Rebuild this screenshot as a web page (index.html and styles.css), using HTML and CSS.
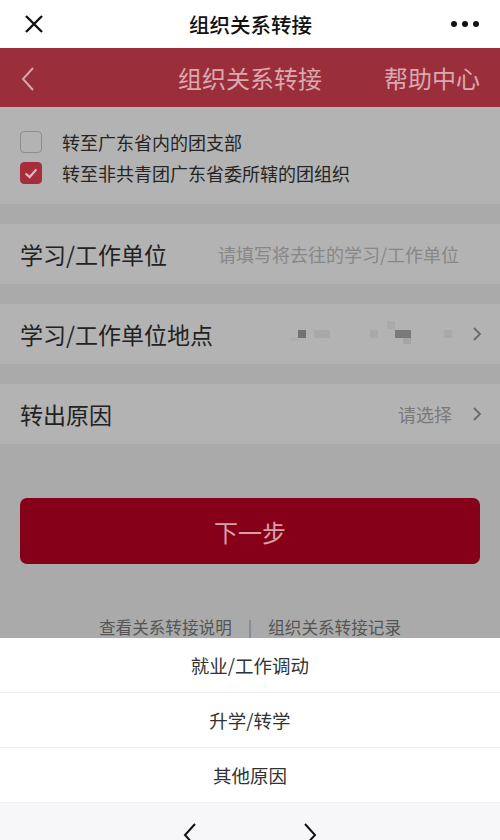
FILE: index.html
```html
<!DOCTYPE html>
<html lang="zh">
<head>
    <meta charset="UTF-8">
    <meta name="viewport" content="width=device-width, initial-scale=1">
    <title>组织关系转接</title>
    <link rel="stylesheet" href="styles.css">
</head>
<body>
<div class="topbar">
    <svg class="topIcon" width="22" height="22" viewBox="0 0 22 22"><path d="M3 3L19 19M19 3L3 19" stroke="#111" stroke-width="2.4" fill="none"/></svg>
    <div class="topTitle">组织关系转接</div>
    <svg class="topIcon" width="30" height="8" viewBox="0 0 30 8"><circle cx="4" cy="4" r="3" fill="#111"/><circle cx="15" cy="4" r="3" fill="#111"/><circle cx="26" cy="4" r="3" fill="#111"/></svg>
</div>

<div class="header">
    <svg class="back" width="16" height="26" viewBox="0 0 16 26"><path d="M13 2L3 13L13 24" stroke="#d7a7ad" stroke-width="2" fill="none"/></svg>
    <div class="headerTitle">组织关系转接</div>
    <div class="help">帮助中心</div>
</div>

<div class="checks">
    <div class="checkRow">
        <span class="box"></span>
        <span>转至广东省内的团支部</span>
    </div>
    <div class="checkRow">
        <span class="box boxOn">
            <svg width="22" height="22" viewBox="0 0 22 22"><path d="M5 11.5L9.5 15.5L17 7" stroke="#e0b8bd" stroke-width="2.4" fill="none"/></svg>
        </span>
        <span>转至非共青团广东省委所辖的团组织</span>
    </div>
</div>

<div class="field">
    <div class="label">学习/工作单位</div>
    <div class="placeholder">请填写将去往的学习/工作单位</div>
</div>

<div class="field">
    <div class="label">学习/工作单位地点</div>
    <div class="blur">
        <span class="px px0"></span>
        <span class="px px1"></span>
        <span class="px px2"></span>
        <span class="px px3"></span>
        <span class="px px3b"></span>
        <span class="px px4"></span>
        <span class="px px4b"></span>
        <span class="px px5"></span>
    </div>
    <svg class="arrow" width="10" height="16" viewBox="0 0 10 16"><path d="M2 2L8 8L2 14" stroke="#6a6a6a" stroke-width="1.8" fill="none"/></svg>
</div>

<div class="field">
    <div class="label">转出原因</div>
    <div class="value">请选择</div>
    <svg class="arrow" width="10" height="16" viewBox="0 0 10 16"><path d="M2 2L8 8L2 14" stroke="#6a6a6a" stroke-width="1.8" fill="none"/></svg>
</div>

<div class="btnWrap">
    <div class="btnNext">下一步</div>
</div>

<div class="links">
    <span>查看关系转接说明</span>
    <span class="sep">|</span>
    <span>组织关系转接记录</span>
</div>

<div class="sheet">
    <div class="option">就业/工作调动</div>
    <div class="option">升学/转学</div>
    <div class="option">其他原因</div>
</div>

<div class="navbar">
    <svg width="16" height="26" viewBox="0 0 16 26"><path d="M13 2L3 13L13 24" stroke="#111" stroke-width="2" fill="none"/></svg>
    <svg width="16" height="26" viewBox="0 0 16 26"><path d="M3 2L13 13L3 24" stroke="#111" stroke-width="2" fill="none"/></svg>
</div>
</body>
</html>
```

FILE: styles.css
```css
body{
    margin: 0;
    width: 500px;
    height: 840px;
    overflow: hidden;
    background-color: #aaaaaa;
    font-family: "Noto Sans CJK SC", "Noto Sans", sans-serif;
}
.topbar{
    height: 48px;
    background-color: #ffffff;
    display: flex;
    align-items: center;
    justify-content: space-between;
    padding: 0 20px 0 23px;
}
.topTitle{
    font-size: 20.5px;
    font-weight: 500;
    color: #111;
    margin-left: 6px;
}
.header{
    height: 59px;
    background-color: #9b2e3b;
    display: flex;
    align-items: center;
    padding: 0 20px 0 20px;
    color: #d9a9af;
    font-size: 24px;
}
.back{
    margin-top: 2px;
}
.headerTitle{
    margin-left: 142px;
}
.help{
    margin-left: auto;
}
.checks{
    background-color: #b3b3b3;
    height: 97px;
    padding-top: 19px;
    box-sizing: border-box;
    font-size: 18px;
    color: #252525;
}
.checkRow{
    display: flex;
    align-items: center;
    height: 31px;
    padding-left: 20px;
}
.box{
    width: 20px;
    height: 20px;
    border: 1px solid #8e8e8e;
    border-radius: 4px;
    margin-right: 20px;
    display: flex;
    align-items: center;
    justify-content: center;
}
.boxOn{
    background-color: #a72d3d;
    border-color: #a72d3d;
}
.field{
    margin-top: 20px;
    height: 60px;
    background-color: #b3b3b3;
    display: flex;
    align-items: center;
    padding: 0 20px;
}
.label{
    font-size: 23px;
    color: #222;
}
.placeholder{
    margin-left: auto;
    font-size: 18px;
    color: #878787;
    margin-right: 21px;
}
.value{
    margin-left: auto;
    font-size: 18px;
    color: #7a7a7a;
    margin-right: 20px;
}
.blur{
    margin-left: auto;
    margin-right: 12px;
    width: 170px;
    height: 20px;
    position: relative;
}
.px{
    position: absolute;
    top: 6px;
    width: 8px;
    height: 8px;
}
.px0{ left: 0; top: 13px; height: 4px; background-color: #aeaeae; }
.px1{ left: 8px; background-color: #727272; }
.px2{ left: 24px; width: 16px; background-color: #a8a8a8; }
.px3{ left: 80px; background-color: #a9a9a9; }
.px3b{ left: 97px; top: -3px; background-color: #aaaaaa; }
.px4{ left: 105px; width: 16px; background-color: #7a7a7a; }
.px4b{ left: 113px; top: 14px; height: 6px; background-color: #a5a5a5; }
.px5{ left: 154px; background-color: #a9a9a9; }
.arrow{
    margin-right: -2px;
}
.btnWrap{
    padding: 54px 20px 0 20px;
}
.btnNext{
    height: 66px;
    background-color: #87001a;
    border-radius: 7px;
    display: flex;
    align-items: center;
    justify-content: center;
    color: #d6a0a8;
    font-size: 24px;
}
.links{
    display: flex;
    justify-content: center;
    gap: 16px;
    margin-top: 51px;
    font-size: 16.6px;
    color: #555;
    height: 24px;
    line-height: 24px;
}
.sep{
    color: #777;
}
.sheet{
    margin-top: -1px;
    background-color: #ffffff;
    position: relative;
}
.option{
    height: 54px;
    display: flex;
    align-items: center;
    justify-content: center;
    font-size: 18.5px;
    color: #333;
    border-bottom: 1px solid #eeeeee;
}
.navbar{
    height: 40px;
    background-color: #f7f7f9;
    display: flex;
    justify-content: center;
    gap: 104px;
    padding-top: 19px;
}
```
